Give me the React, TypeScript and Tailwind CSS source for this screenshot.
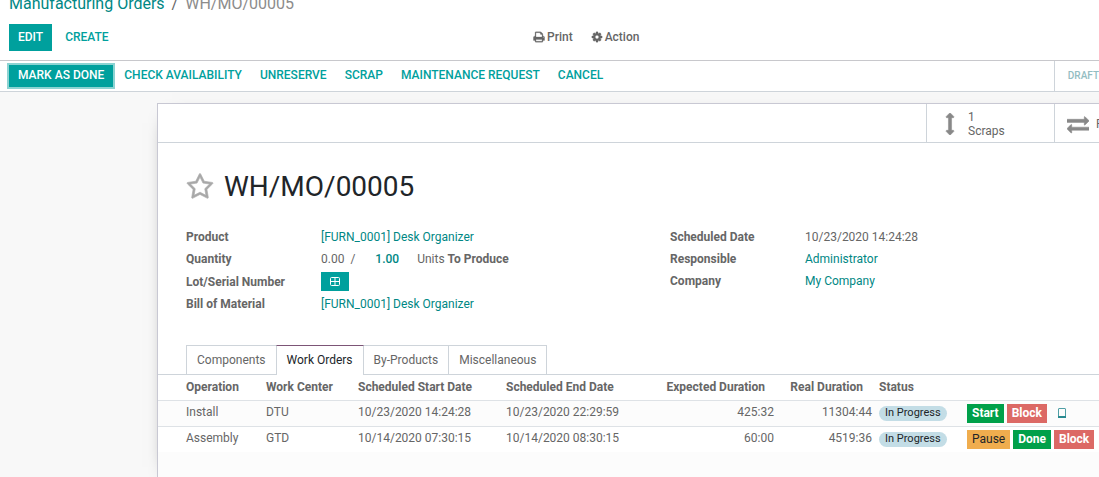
import React from "react";

const PRINT =
  "M448 1536h896v-256h-896v256zm0-640h896v-384h-160q-40 0-68-28t-28-68v-160h-640v640zm1152 64q0-26-19-45t-45-19-45 19-19 45 19 45 45 19 45-19 19-45zm128 0v416q0 13-9.5 22.5t-22.5 9.5h-224v160q0 40-28 68t-68 28h-960q-40 0-68-28t-28-68v-160h-224q-13 0-22.5-9.5t-9.5-22.5v-416q0-79 56.5-135.5t135.5-56.5h64v-544q0-40 28-68t68-28h672q40 0 88 20t76 48l152 152q28 28 48 76t20 88v256h64q79 0 135.5 56.5t56.5 135.5z";
const COG =
  "M1152 896q0-106-75-181t-181-75-181 75-75 181 75 181 181 75 181-75 75-181zm512-109v222q0 12-8 23t-20 13l-185 28q-19 54-39 91 35 50 107 138 10 12 10 25t-9 23q-27 37-99 108t-94 71q-12 0-26-9l-138-108q-44 23-91 38-16 136-29 186-7 28-36 28h-222q-14 0-24.5-8.5t-11.5-21.5l-28-184q-49-16-90-37l-141 107q-10 9-25 9-14 0-25-11-126-114-165-168-7-10-7-23 0-12 8-23 15-21 51-66.5t54-70.5q-27-50-41-99l-183-27q-13-2-21-12.5t-8-23.5v-222q0-12 8-23t19-13l186-28q14-46 39-92-40-57-107-138-10-12-10-24 0-10 9-23 26-36 98.5-107.5t94.5-71.5q13 0 26 10l138 107q44-23 91-38 16-136 29-186 7-28 36-28h222q14 0 24.5 8.5t11.5 21.5l28 184q49 16 90 37l142-107q9-9 24-9 13 0 25 10 129 119 165 170 7 8 7 22 0 12-8 23-15 21-51 66.5t-54 70.5q26 50 41 98l183 28q13 2 21 12.5t8 23.5z";
const STAR =
  "M1201 1004l306-297-422-62-189-382-189 382-422 62 306 297-73 421 378-199 377 199zm527-357q0 22-26 48l-363 354 86 500q1 7 1 20 0 50-41 50-19 0-40-12l-449-236-449 236q-22 12-40 12-21 0-31.5-14.5t-10.5-35.5q0-6 2-20l86-500-364-354q-25-27-25-48 0-37 56-46l502-73 225-455q19-41 49-41t49 41l225 455 502 73q56 9 56 46z";
const EXCHANGE =
  "M1792 1184v192q0 13-9.5 22.5t-22.5 9.5h-1376v192q0 13-9.5 22.5t-22.5 9.5q-12 0-24-10l-319-320q-9-9-9-22 0-14 9-23l320-320q9-9 23-9 13 0 22.5 9.5t9.5 22.5v192h1376q13 0 22.5 9.5t9.5 22.5zm0-544q0 14-9 23l-320 320q-9 9-23 9-13 0-22.5-9.5t-9.5-22.5v-192h-1376q-13 0-22.5-9.5t-9.5-22.5v-192q0-13 9.5-22.5t22.5-9.5h1376v-192q0-14 9-23t23-9q12 0 24 10l319 319q9 9 9 23z";
const ARROWS_V =
  "M1216 320q0 26-19 45t-45 19h-128v1024h128q26 0 45 19t19 45-19 45l-256 256q-19 19-45 19t-45-19l-256-256q-19-19-19-45t19-45 45-19h128v-1024h-128q-26 0-45-19t-19-45 19-45l256-256q19-19 45-19t45 19l256 256q19 19 19 45z";

const Icon: React.FC<{ path: string; className: string }> = ({
  path,
  className,
}) => (
  <svg
    viewBox="0 0 1792 1792"
    fill="currentColor"
    stroke="currentColor"
    strokeWidth="40"
    aria-hidden="true"
    className={className}
  >
    <path d={path} />
  </svg>
);

const statusActions = [
  "Check availability",
  "Unreserve",
  "Scrap",
  "Maintenance Request",
  "Cancel",
];

const tabs = ["Components", "Work Orders", "By-Products", "Miscellaneous"];

const workOrders = [
  {
    operation: "Install",
    workCenter: "DTU",
    start: "10/23/2020 14:24:28",
    end: "10/23/2020 22:29:59",
    expected: "425:32",
    real: "11304:44",
    status: "In Progress",
    actions: ["Start", "Block"],
    tablet: true,
  },
  {
    operation: "Assembly",
    workCenter: "GTD",
    start: "10/14/2020 07:30:15",
    end: "10/14/2020 08:30:15",
    expected: "60:00",
    real: "4519:36",
    status: "In Progress",
    actions: ["Pause", "Done", "Block"],
    tablet: false,
  },
];

const actionStyles: Record<string, string> = {
  Start: "bg-[#00a04a] text-white font-bold",
  Done: "bg-[#00a04a] text-white font-bold",
  Block: "bg-[#dc6965] text-white font-bold",
  Pause: "bg-[#f0ad4e] text-[#212529]",
};

const Field: React.FC<{ label: string; children: React.ReactNode }> = ({
  label,
  children,
}) => (
  <div className="flex min-h-[22px] items-center">
    <dt className="w-[135px] shrink-0 font-bold">{label}</dt>
    <dd className="flex items-center whitespace-nowrap">{children}</dd>
  </div>
);

const FieldLink: React.FC<{ children: React.ReactNode }> = ({ children }) => (
  <a href="#" className="text-[#008784]">
    {children}
  </a>
);

const App: React.FC = () => {
  const [activeTab, setActiveTab] = React.useState("Work Orders");

  return (
    <div className="flex min-h-screen flex-col overflow-hidden bg-[#f8f8f8] font-['Roboto',sans-serif] text-xs text-[#666666]">
      <header className="border-b border-[#c8c8cc] bg-white px-[9px] pb-[9px]">
        <nav className="flex h-4 items-end text-base leading-6">
          <a href="#" className="text-[#008784]">
            Manufacturing Orders
          </a>
          <span className="px-[7px]">/</span>
          <span className="text-[#8c8c8c]">WH/MO/00005</span>
        </nav>
        <div className="mt-2 flex items-center">
          <div className="flex w-[524px] items-center">
            <button
              type="button"
              className="h-[27px] bg-[#00a09d] px-[9px] pb-[2px] font-medium text-white uppercase"
            >
              Edit
            </button>
            <button
              type="button"
              className="h-[27px] px-[13px] pb-[2px] font-medium text-[#00a09d] uppercase"
            >
              Create
            </button>
          </div>
          <div className="flex items-center gap-[18px] pb-[2px] font-medium">
            <button type="button" className="flex items-center gap-[2px]">
              <Icon path={PRINT} className="size-3" />
              Print
            </button>
            <button type="button" className="flex items-center gap-[2px]">
              <Icon path={COG} className="size-3" />
              Action
            </button>
          </div>
        </div>
      </header>

      <div className="flex h-[31px] items-stretch border-b border-[#ced4da] bg-white pl-[9px]">
        <div className="flex items-center">
          <button
            type="button"
            className="mr-[2px] h-[22px] bg-[#00a09d] px-[9px] pb-[2px] font-medium text-white uppercase ring-2 ring-[#8cd3d2]"
          >
            Mark as Done
          </button>
          {statusActions.map((action) => (
            <button
              key={action}
              type="button"
              className="h-[22px] px-[9px] pb-[2px] font-medium text-[#00a09d] uppercase"
            >
              {action}
            </button>
          ))}
        </div>
        <div className="ml-auto flex items-center border-l border-[#ced4da] pl-[13px] text-[10px] font-medium text-[#93bdc2]">
          DRAFT
        </div>
      </div>

      <main className="mt-[11px] ml-[157px] flex min-w-[1025px] grow flex-col border-t border-l border-[#c8c8d3] bg-white shadow-[0_5px_20px_-15px_#000]">
        <div className="flex h-[39px] justify-end border-b border-[#ced4da]">
          <button
            type="button"
            className="flex w-32 items-center border-l border-[#ced4da] pt-px text-left leading-[14px]"
          >
            <Icon path={ARROWS_V} className="ml-3 size-[22px] text-[#888888]" />
            <span className="ml-[7px]">
              1<br />
              Scraps
            </span>
          </button>
          <button
            type="button"
            className="flex w-32 items-center border-l border-[#ced4da] pt-px text-left whitespace-nowrap"
          >
            <Icon path={EXCHANGE} className="ml-3 size-[22px] text-[#888888]" />
            <span className="ml-[7px]">Product Moves</span>
          </button>
        </div>

        <div className="px-7 pt-[26px]">
          <h1 className="flex items-center gap-[10px] text-[28px] leading-9 text-[#212529]">
            <button type="button" aria-label="Priority">
              <Icon path={STAR} className="size-7 text-[#a8a8a8]" />
            </button>
            WH/MO/00005
          </h1>

          <div className="mt-[21px] grid grid-cols-2">
            <dl>
              <Field label="Product">
                <FieldLink>[FURN_0001] Desk Organizer</FieldLink>
              </Field>
              <Field label="Quantity">
                <span>0.00</span>
                <span className="ml-[6px]">/</span>
                <span className="ml-5 font-medium text-[#008784]">1.00</span>
                <span className="ml-[18px]">Units</span>
                <span className="ml-[3px] font-bold">To Produce</span>
              </Field>
              <Field label="Lot/Serial Number">
                <button
                  type="button"
                  aria-label="Create lot"
                  className="my-[2px] flex h-[19px] w-7 items-center justify-center bg-[#00a09d] text-white"
                >
                  <svg
                    viewBox="0 0 12 12"
                    fill="none"
                    stroke="currentColor"
                    className="size-3"
                  >
                    <rect x="1.5" y="1.5" width="9" height="8" rx="1" />
                    <path d="M6 2v7M2 5.5h8" />
                  </svg>
                </button>
              </Field>
              <Field label="Bill of Material">
                <FieldLink>[FURN_0001] Desk Organizer</FieldLink>
              </Field>
            </dl>
            <dl>
              <Field label="Scheduled Date">10/23/2020 14:24:28</Field>
              <Field label="Responsible">
                <FieldLink>Administrator</FieldLink>
              </Field>
              <Field label="Company">
                <FieldLink>My Company</FieldLink>
              </Field>
            </dl>
          </div>
        </div>

        <div
          role="tablist"
          className="mt-[30px] flex border-b border-[#ced4da] pl-7"
        >
          {tabs.map((tab) => (
            <button
              key={tab}
              type="button"
              role="tab"
              aria-selected={tab === activeTab}
              onClick={() => setActiveTab(tab)}
              className={
                tab === activeTab
                  ? "-mb-px h-[30px] border-x border-t border-x-[#ced4da] border-t-[#7c5576] bg-white px-[10px] pb-[2px] text-[#212529]"
                  : "h-[29px] border-t border-[#ced4da] px-[10px] first:border-l last:border-r [&+&]:border-l"
              }
            >
              {tab}
            </button>
          ))}
        </div>

        <table className="w-full table-fixed whitespace-nowrap">
          <colgroup>
            <col className="w-[104px]" />
            <col className="w-[92px]" />
            <col className="w-[148px]" />
            <col className="w-[163px]" />
            <col className="w-[113px]" />
            <col className="w-[98px]" />
            <col className="w-[87px]" />
            <col />
          </colgroup>
          <thead>
            <tr className="h-[25px] border-b border-[#dee2e6] text-left">
              <th className="pb-px pl-7">Operation</th>
              <th className="px-1 pb-px">Work Center</th>
              <th className="px-1 pb-px">Scheduled Start Date</th>
              <th className="px-1 pb-px">Scheduled End Date</th>
              <th className="pr-[13px] pb-px text-right">Expected Duration</th>
              <th className="pr-[13px] pb-px text-right">Real Duration</th>
              <th className="px-[3px] pb-px">Status</th>
              <th aria-label="Actions" />
            </tr>
          </thead>
          <tbody>
            {workOrders.map((order) => (
              <tr
                key={order.operation}
                className="h-[26px] border-b border-[#dee2e6] first:bg-[#fcfcfc] last:border-b-0"
              >
                <td className="pb-[2px] pl-7">{order.operation}</td>
                <td className="px-1 pb-[2px]">{order.workCenter}</td>
                <td className="px-1 pb-[2px]">{order.start}</td>
                <td className="px-1 pb-[2px]">{order.end}</td>
                <td className="px-1 pb-[2px] text-right">{order.expected}</td>
                <td className="px-1 pb-[2px] text-right">{order.real}</td>
                <td className="px-[3px]">
                  <span className="flex h-[15px] w-fit items-center rounded-full bg-[#c3dde6] px-[6px] text-[11px] text-[#212529]">
                    {order.status}
                  </span>
                </td>
                <td className="px-1">
                  <div className="flex items-center gap-[3px]">
                    {order.actions.map((action) => (
                      <button
                        key={action}
                        type="button"
                        className={`h-[19px] px-[5px] ${actionStyles[action]}`}
                      >
                        {action}
                      </button>
                    ))}
                    {order.tablet && (
                      <button
                        type="button"
                        aria-label="Open tablet view"
                        className="ml-2 text-[#4f9fa5]"
                      >
                        <svg viewBox="0 0 8 10" className="h-[10px] w-2">
                          <rect
                            x="0.5"
                            y="0.5"
                            width="7"
                            height="9"
                            rx="0.5"
                            fill="none"
                            stroke="currentColor"
                          />
                          <path d="M0 8h8v2H0z" fill="#2a8a90" />
                        </svg>
                      </button>
                    )}
                  </div>
                </td>
              </tr>
            ))}
          </tbody>
        </table>
        <div className="grow bg-[#fcfcfc]" />
      </main>
    </div>
  );
};

export default App;
